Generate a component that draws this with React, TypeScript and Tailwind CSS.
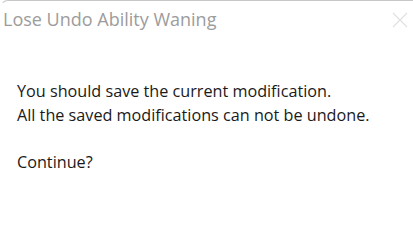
export default function App() {
  return (
    <div className="w-[413px] h-[203px] bg-white overflow-hidden">
      <div className="w-[420px] h-[210px] bg-white border-t border-l border-t-[#c8c8c8] border-l-transparent rounded-tl-[8px] flex flex-col">
        <div className="flex items-center justify-between h-[38px] pl-[2px] pr-[12px]">
          <span className="text-[18px] text-[#9c9c9c] font-['Open_Sans',sans-serif] leading-none mb-[2px]">Lose Undo Ability Waning</span>
          <svg width="16" height="16" viewBox="0 0 16 16">
            <path d="M1 1 L15 15 M15 1 L1 15" stroke="#e0e0e0" strokeWidth="1.2" />
          </svg>
        </div>
        <div className="pl-[16px] pt-[41px] text-[16.2px] leading-[23.5px] text-[#1a1a1a] font-['Open_Sans',sans-serif]">
          <p>You should save the current modification.</p>
          <p>All the saved modifications can not be undone.</p>
          <p>&nbsp;</p>
          <p>Continue?</p>
        </div>
      </div>
    </div>
  );
}
